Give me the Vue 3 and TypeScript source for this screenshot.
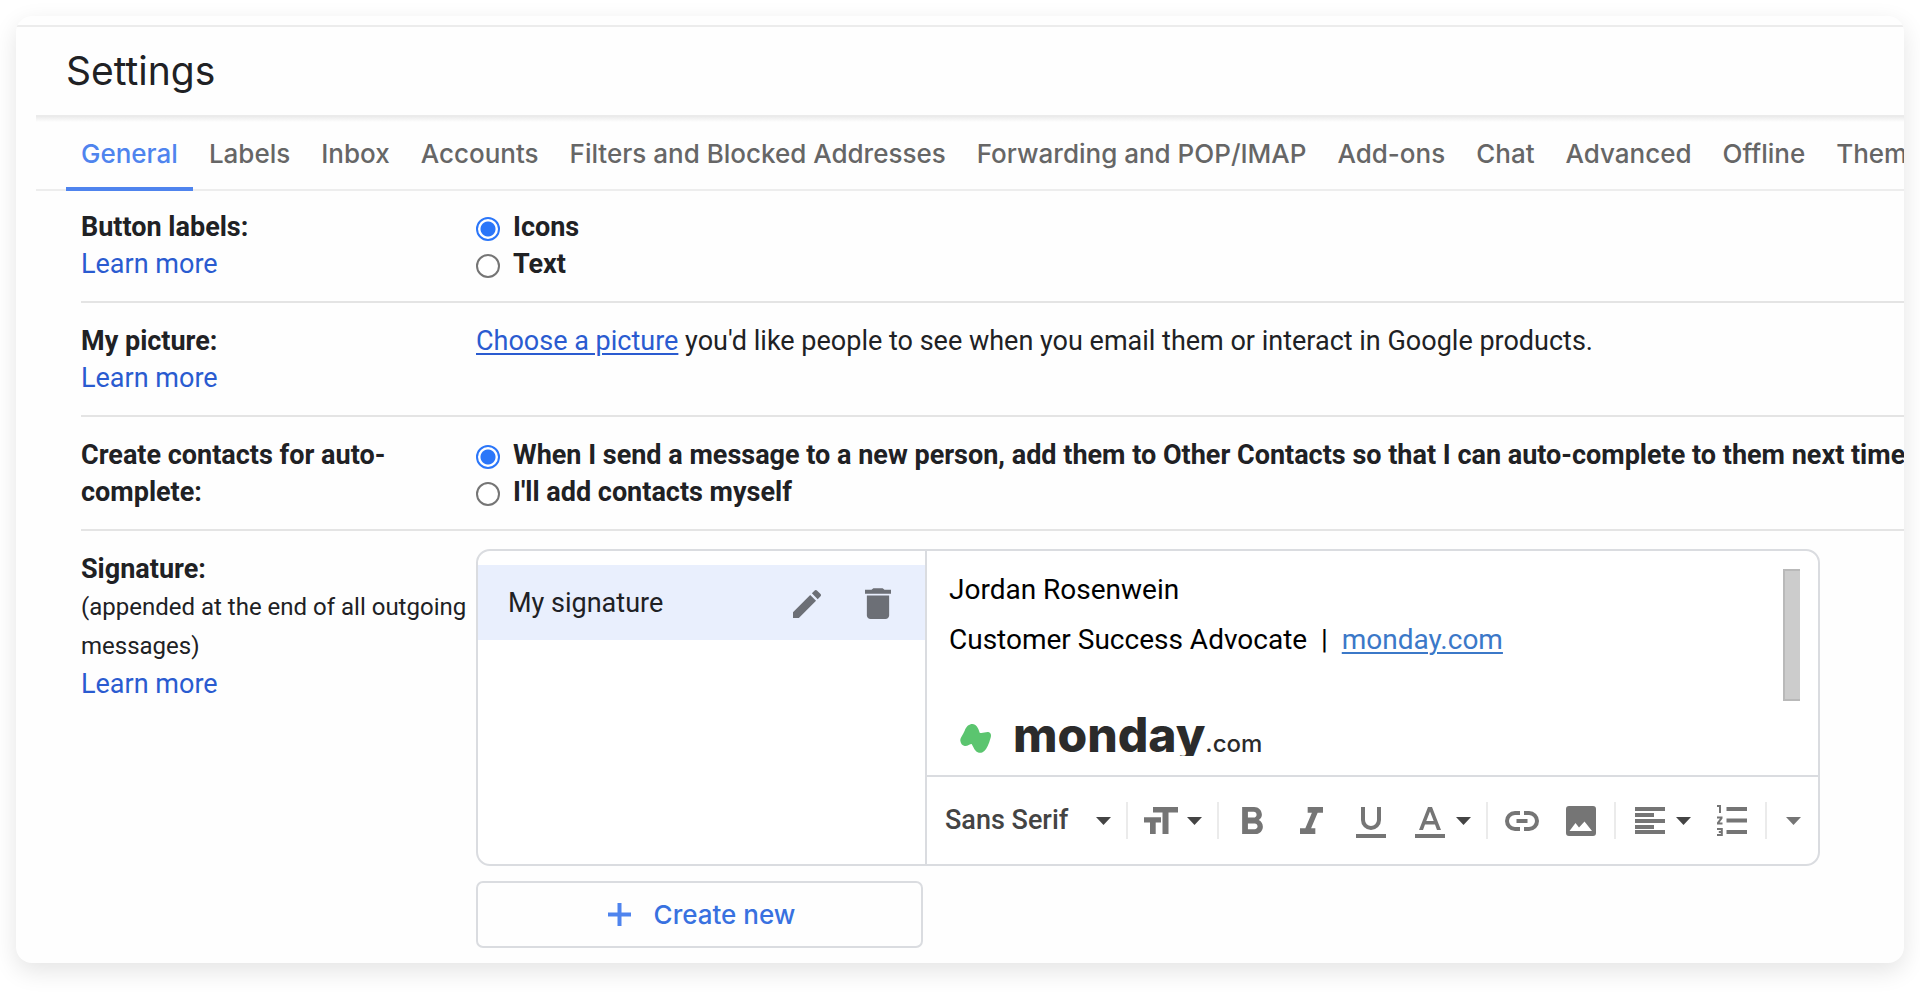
<script setup lang="ts">
import { ref } from 'vue'

const tabs: string[] = [
  'General',
  'Labels',
  'Inbox',
  'Accounts',
  'Filters and Blocked Addresses',
  'Forwarding and POP/IMAP',
  'Add-ons',
  'Chat',
  'Advanced',
  'Offline',
  'Themes',
]
const activeTab = ref('General')
const buttonLabels = ref('icons')
const contacts = ref('auto')
const font = ref('Sans Serif')
</script>

<template>
  <main class="card">
    <header class="header">
      <h1>Settings</h1>
    </header>
    <nav class="tabs" aria-label="Settings sections">
      <a
        v-for="tab in tabs"
        :key="tab"
        href="#"
        class="tab"
        :class="{ active: tab === activeTab }"
        @click.prevent="activeTab = tab"
      >{{ tab }}</a>
    </nav>

    <div class="rows">
      <section class="row">
        <div class="name">
          <h2 id="labels-title">Button labels:</h2>
          <a href="#">Learn more</a>
        </div>
        <div class="value" role="radiogroup" aria-labelledby="labels-title">
          <label class="option">
            <input v-model="buttonLabels" type="radio" name="labels" value="icons" />Icons
          </label>
          <label class="option">
            <input v-model="buttonLabels" type="radio" name="labels" value="text" />Text
          </label>
        </div>
      </section>

      <section class="row">
        <div class="name">
          <h2>My picture:</h2>
          <a href="#">Learn more</a>
        </div>
        <p class="value">
          <a href="#" class="underlined">Choose a picture</a> you'd like people to see when you email
          them or interact in Google products.
        </p>
      </section>

      <section class="row">
        <div class="name">
          <h2 id="contacts-title">Create contacts for auto-complete:</h2>
        </div>
        <div class="value" role="radiogroup" aria-labelledby="contacts-title">
          <label class="option">
            <input v-model="contacts" type="radio" name="contacts" value="auto" />When I send a message
            to a new person, add them to Other Contacts so that I can auto-complete to them next time
          </label>
          <label class="option">
            <input v-model="contacts" type="radio" name="contacts" value="manual" />I'll add contacts
            myself
          </label>
        </div>
      </section>

      <section class="row signature-row">
        <div class="name">
          <h2>Signature:</h2>
          <p class="hint">(appended at the end of all outgoing messages)</p>
          <a href="#">Learn more</a>
        </div>
        <div class="value">
          <div class="editor">
            <div class="list">
              <div class="list-item">
                <span class="list-name">My signature</span>
                <button type="button" aria-label="Edit signature name">
                  <svg width="28" height="28" viewBox="3 3 18 18"><path d="M3 17.25V21h3.75L17.81 9.94l-3.75-3.75L3 17.25zM20.71 7.04c.39-.39.39-1.02 0-1.41l-2.34-2.34c-.39-.39-1.02-.39-1.41 0l-1.83 1.83 3.75 3.75 1.83-1.83z" /></svg>
                </button>
                <button type="button" aria-label="Delete signature">
                  <svg width="26" height="31" viewBox="5 3 14 18" preserveAspectRatio="none"><path d="M6 19c0 1.1.9 2 2 2h8c1.1 0 2-.9 2-2V7.3H6V19zM19 4h-3.5l-1-.8h-5l-1 .8H5v2.3h14V4z" /></svg>
                </button>
              </div>
            </div>

            <div class="compose">
              <div class="body">
                <div class="text" contenteditable="true" role="textbox" aria-label="Signature" spellcheck="false">
                  <p>Jordan Rosenwein</p>
                  <p>Customer Success Advocate&nbsp; |&nbsp; <a href="#">monday.com</a></p>
                  <div class="brand">
                    <svg width="31" height="29" viewBox="0 0 93 87"><path d="M1 50C0 42 8 34 14 20C19 6 28 0 37 0C49 1 54 10 59 26C67 29 76 23 85 24C93 26 95 34 91 44C87 60 80 74 73 81C64 89 54 88 47 80C41 74 40 68 35 60C29 60 23 67 14 66C6 64 2 58 1 50Z" /></svg>
                    <span class="brand-name">monday</span><span class="brand-tld">.com</span>
                  </div>
                </div>
                <div class="scroll-thumb"></div>
              </div>

              <div class="toolbar" role="toolbar" aria-label="Formatting">
                <div class="font">
                  <select v-model="font" aria-label="Font">
                    <option>Sans Serif</option>
                    <option>Serif</option>
                    <option>Fixed Width</option>
                  </select>
                  <svg class="arrow" width="15" height="8" viewBox="0 0 15 8"><path d="M0 0h15L7.5 8z" /></svg>
                </div>
                <span class="sep"></span>
                <button type="button" class="combo size" aria-label="Size">
                  <svg width="34" height="27" viewBox="0 0 34 27"><path d="M9 0h25v5.500h-9.500V27H18.500V5.500H9zM0 10.300h17v5.200h-5.300V27H6V15.500H0z" /></svg>
                  <svg class="arrow" width="15" height="8" viewBox="0 0 15 8"><path d="M0 0h15L7.5 8z" /></svg>
                </button>
                <span class="sep"></span>
                <button type="button" class="tool" aria-label="Bold">
                  <svg width="21" height="27" viewBox="7 4 10.750 14"><path d="M15.600 10.790c.97-.67 1.650-1.770 1.650-2.790 0-2.260-1.750-4-4-4H7v14h7.040c2.090 0 3.710-1.700 3.710-3.790 0-1.520-.86-2.820-2.150-3.420zM10 6.500h3c.83 0 1.500.67 1.500 1.500s-.67 1.500-1.500 1.500h-3v-3zm3.500 9H10v-3h3.500c.83 0 1.500.67 1.500 1.500s-.67 1.500-1.500 1.500z" /></svg>
                </button>
                <button type="button" class="tool" aria-label="Italic">
                  <svg width="23" height="27" viewBox="6 4 12 14"><path d="M10 4v3h2.210l-3.420 8H6v3h8v-3h-2.210l3.420-8H18V4z" /></svg>
                </button>
                <button type="button" class="tool" aria-label="Underline">
                  <svg class="low" width="30" height="31" viewBox="0 0 30 31"><path d="M5 0h4v13a6 6 0 0 0 12 0V0h4v13a10 10 0 0 1-20 0zM0 27h30v4H0z" /></svg>
                </button>
                <button type="button" class="combo" aria-label="Text colour">
                  <svg class="low" width="30" height="31" viewBox="0 0 30 31"><path d="M13 0h4l9 23h-4l-2-5.500H10L8 23H4zM15 4.500 11.300 14h7.400zM0 27h30v4H0z" /></svg>
                  <svg class="arrow" width="15" height="8" viewBox="0 0 15 8"><path d="M0 0h15L7.5 8z" /></svg>
                </button>
                <span class="sep"></span>
                <button type="button" class="tool" aria-label="Link">
                  <svg width="34" height="20" viewBox="0 0 34 20"><path class="line" d="M15 2H10a8 8 0 0 0 0 16h5M19 2h5a8 8 0 0 1 0 16h-5M11.500 10h11" /></svg>
                </button>
                <button type="button" class="tool" aria-label="Insert image">
                  <svg width="30" height="30" viewBox="0 0 30 30"><path d="M3 0h24a3 3 0 0 1 3 3v24a3 3 0 0 1-3 3H3a3 3 0 0 1-3-3V3a3 3 0 0 1 3-3zM3.500 25H26l-7.500-9.500L13 21.500l-3.500-4.500z" /></svg>
                </button>
                <span class="sep"></span>
                <button type="button" class="combo" aria-label="Align">
                  <svg width="30" height="27" viewBox="0 0 30 27"><path d="M0 0h30v4H0zM0 6h19v4H0zM0 12h30v4H0zM0 18h19v4H0zM0 23h30v4H0z" /></svg>
                  <svg class="arrow" width="15" height="8" viewBox="0 0 15 8"><path d="M0 0h15L7.5 8z" /></svg>
                </button>
                <button type="button" class="tool" aria-label="Numbered list">
                  <svg width="30" height="31" viewBox="0 0 30 31"><path d="M9.500 2H30v4H9.500zM9.500 13.500H30v4H9.500zM9.500 25H30v4H9.500zM0 0h4v8H2V2H0zM0 11.500h5.500v2L2.600 17.500h2.900v2H0v-2l3-4H0zM0 23h5.800v8H0v-2h3.800v-1H1.800v-2h2v-1H0z" /></svg>
                </button>
                <span class="sep"></span>
                <button type="button" class="combo" aria-label="More formatting options">
                  <svg width="15" height="8" viewBox="0 0 15 8"><path d="M0 0h15L7.5 8z" /></svg>
                </button>
              </div>
            </div>
          </div>

          <button type="button" class="create">
            <svg width="23" height="23" viewBox="0 0 23 23"><path d="M9.500 0h4v9.500H23v4h-9.500V23h-4v-9.500H0v-4h9.500z" /></svg>
            Create new
          </button>
        </div>
      </section>
    </div>
  </main>
</template>

<style>
body {
  margin: 0;
  background: #fff;
}
</style>

<style scoped>
.card {
  box-sizing: border-box;
  margin: 16px 16px 32px;
  padding-top: 9px;
  border-radius: 16px;
  overflow: hidden;
  background: #fefefe;
  box-shadow: 0 8px 24px rgba(0, 0, 0, 0.11);
  color: #202124;
  font-family: Roboto, "Liberation Sans", sans-serif;
  font-size: 27px;
  line-height: 37px;
}
h1,
h2,
p {
  margin: 0;
  font: inherit;
}
a {
  color: #2a5bd0;
  text-decoration: none;
}
button {
  padding: 0;
  border: 0;
  background: none;
  cursor: pointer;
}
svg {
  display: block;
  flex: none;
}
.header {
  border-top: 2px solid #ececec;
  padding: 0 50px;
}
h1 {
  font-family: Inter, sans-serif;
  font-size: 39px;
  line-height: 88px;
}
.tabs {
  display: flex;
  gap: 1px;
  margin-left: 20px;
  padding-left: 30px;
  border-top: 2px solid #ebebeb;
  border-bottom: 2px solid #ededed;
  background: linear-gradient(#ededed, #fefefe) 0 0 / 100% 5px no-repeat;
}
.tab {
  flex: none;
  margin-bottom: -2px;
  padding: 4px 15px 0;
  border-bottom: 4px solid transparent;
  color: #666;
  font-family: Inter, sans-serif;
  font-size: 26px;
  font-weight: 500;
  line-height: 66px;
}
.tab.active {
  border-color: #4f84ee;
  color: #4f84ee;
}
.rows {
  padding-left: 65px;
}
.row {
  display: grid;
  grid-template-columns: 395px minmax(0, 1fr);
  padding: 20px 0 18px;
  border-top: 2px solid #e4e4e4;
}
.row:first-child {
  padding-top: 18px;
  border-top: 0;
}
h2 {
  font-weight: 700;
}
.underlined {
  text-decoration: underline;
  text-decoration-thickness: 2px;
  text-underline-offset: 3px;
}
.option {
  display: flex;
  align-items: center;
  gap: 13px;
  font-weight: 700;
  white-space: nowrap;
}
.option input {
  appearance: none;
  flex: none;
  width: 24px;
  height: 24px;
  margin: 2px 0 0;
  border: 2px solid #757575;
  border-radius: 50%;
  background: #fff;
}
.option input:checked {
  border-color: #2b76f9;
  background: radial-gradient(circle, #2b76f9 7px, #fff 8px);
}
.signature-row {
  padding: 18px 0 15px;
}
.signature-row .name {
  padding-top: 2px;
}
.hint {
  font-size: 24px;
  line-height: 39px;
}
.editor {
  display: grid;
  grid-template-columns: 447px minmax(0, 1fr);
  box-sizing: border-box;
  max-width: 1344px;
  border: 2px solid #dadce0;
  border-radius: 14px;
  background: #fff;
}
.list {
  padding-top: 14px;
}
.list-item {
  display: flex;
  align-items: center;
  gap: 44px;
  padding: 20px 34px 18px 30px;
  background: #e9effd;
}
.list-name {
  flex: 1;
}
.list-item svg {
  fill: #6c6f76;
}
.compose {
  border-left: 2px solid #dadce0;
}
.body {
  display: flex;
  align-items: flex-start;
  padding: 14px 18px 19px 22px;
}
.text {
  flex: 1;
  outline: 0;
  color: #000;
  font-size: 28px;
  line-height: 50px;
}
.text a {
  color: #3b78c8;
  text-decoration: underline;
  text-decoration-thickness: 2px;
  text-underline-offset: 3px;
}
.brand {
  display: flex;
  align-items: flex-start;
  height: 46px;
  margin-top: 45px;
  padding-left: 11px;
  overflow: hidden;
  color: #2b2b2b;
  font-family: Inter, sans-serif;
  line-height: 50px;
}
.brand svg {
  margin: 14px 22px 0 0;
  fill: #5bc56f;
}
.brand-name {
  font-size: 48px;
  font-weight: 800;
}
.brand-tld {
  font-size: 24px;
  font-weight: 500;
  line-height: 68px;
}
.scroll-thumb {
  box-sizing: border-box;
  width: 17px;
  height: 132px;
  margin-top: 4px;
  border: solid #b9b9b9;
  border-width: 2px 0 2px 2px;
  background: #ccc;
}
.toolbar {
  display: flex;
  align-items: center;
  height: 87px;
  padding-left: 18px;
  border-top: 2px solid #dadce0;
}
.toolbar svg {
  fill: #757575;
}
.toolbar .arrow {
  fill: #444;
}
.toolbar .low {
  margin-top: 4px;
}
.toolbar .line {
  fill: none;
  stroke: #757575;
  stroke-width: 4;
}
.font {
  display: grid;
  align-items: center;
  width: 177px;
}
.font select,
.font svg {
  grid-area: 1 / 1;
}
.font svg {
  justify-self: end;
  margin-right: 11px;
  pointer-events: none;
}
.font select {
  appearance: none;
  width: 100%;
  padding: 0;
  border: 0;
  background: none;
  color: #444;
  font: 500 27px/37px Roboto, sans-serif;
}
.sep {
  flex: none;
  width: 2px;
  height: 37px;
  margin: 0 4px;
  background: #ebebeb;
}
.tool {
  display: flex;
  justify-content: center;
  flex: none;
  width: 59px;
}
.combo {
  display: flex;
  align-items: center;
  flex: none;
  gap: 11px;
  padding: 0 11px 0 15px;
}
.size {
  gap: 9px;
  padding-left: 12px;
}
.create {
  display: flex;
  align-items: center;
  justify-content: center;
  gap: 23px;
  box-sizing: border-box;
  width: 447px;
  height: 67px;
  margin-top: 15px;
  padding-left: 4px;
  border: 2px solid #dadce0;
  border-radius: 7px;
  color: #3871e0;
  font: 500 26px/37px Inter, sans-serif;
}
.create svg {
  fill: #4f84ee;
}
</style>
